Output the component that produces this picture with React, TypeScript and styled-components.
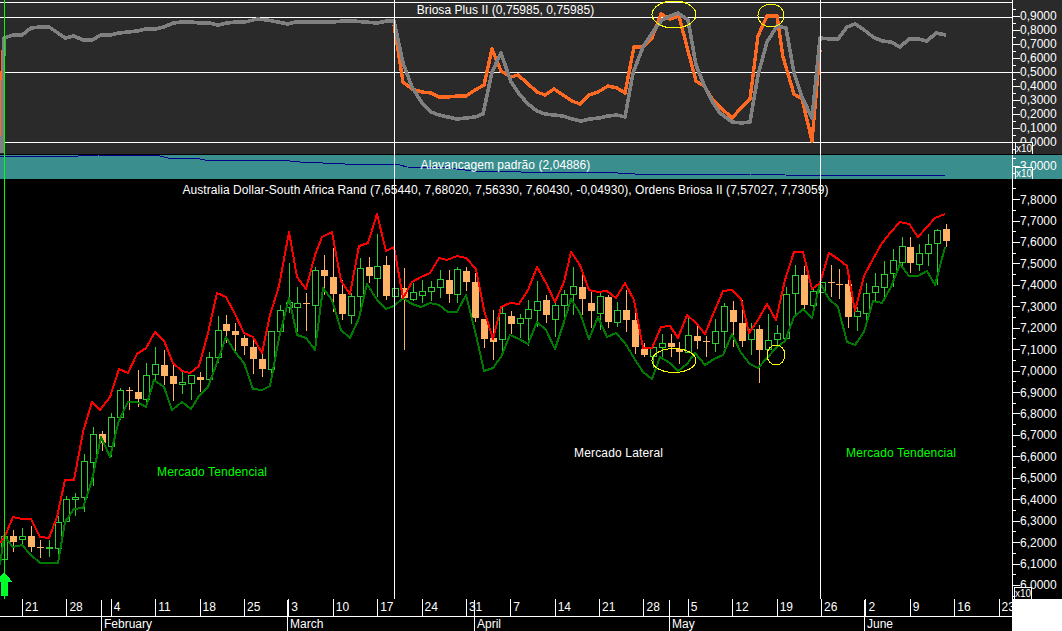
import React from 'react';
import styled, { createGlobalStyle } from 'styled-components';

const GlobalStyle = createGlobalStyle`
  html, body { margin: 0; padding: 0; background: #000; }
  body { font-family: "Liberation Sans", Arial, sans-serif; font-size: 12px; color: #fff; }
`;

// [wick top, body top, body bottom, wick bottom, up]
const candles: [number, number, number, number, number][] = [
  [528, 536, 559, 565, 1], [530, 536, 542, 552, 0], [528, 536, 539, 547, 1], [526, 536, 547, 552, 0],
  [540, 547, 548, 558, 0], [540, 547, 547, 557, 1], [516, 522, 548, 560, 1], [496, 499, 521, 522, 1],
  [493, 497, 499, 516, 1], [454, 461, 497, 512, 1], [427, 434, 462, 486, 1], [431, 434, 443, 451, 0],
  [413, 417, 446, 457, 1], [388, 390, 417, 420, 1], [387, 390, 390, 410, 0], [370, 392, 399, 407, 0],
  [363, 375, 399, 405, 1], [347, 364, 374, 380, 1], [350, 365, 376, 385, 0], [365, 376, 384, 401, 0],
  [372, 382, 384, 394, 1], [375, 375, 383, 400, 1], [372, 377, 380, 392, 0], [352, 357, 379, 385, 1],
  [316, 330, 357, 363, 1], [315, 324, 331, 343, 0], [323, 331, 335, 352, 0], [335, 338, 346, 355, 0],
  [339, 347, 359, 374, 0], [353, 359, 369, 377, 0], [331, 331, 369, 380, 1], [305, 310, 331, 332, 1],
  [263, 302, 307, 313, 1], [287, 303, 307, 332, 1], [293, 303, 303, 331, 0], [267, 270, 305, 338, 1],
  [255, 270, 276, 295, 0], [248, 277, 294, 312, 0], [280, 294, 314, 320, 0], [293, 296, 315, 324, 1],
  [258, 268, 296, 311, 1], [257, 267, 276, 283, 0], [234, 266, 278, 297, 1], [256, 265, 296, 300, 0],
  [288, 288, 296, 296, 1], [268, 288, 298, 350, 0], [283, 292, 299, 301, 1], [280, 291, 295, 303, 1],
  [281, 287, 291, 301, 1], [270, 279, 287, 298, 1], [270, 280, 294, 303, 0], [267, 269, 294, 303, 1],
  [267, 271, 282, 291, 0], [273, 282, 318, 322, 0], [319, 319, 339, 348, 0], [310, 338, 342, 360, 0],
  [307, 313, 339, 354, 1], [311, 316, 324, 334, 0], [314, 318, 323, 338, 1], [300, 309, 318, 346, 1],
  [281, 301, 310, 327, 1], [295, 300, 315, 323, 0], [300, 305, 319, 337, 1], [290, 294, 305, 317, 1],
  [267, 286, 294, 315, 1], [275, 287, 299, 315, 0], [290, 303, 311, 328, 0], [292, 296, 313, 330, 1],
  [295, 297, 322, 328, 0], [302, 310, 322, 327, 1], [290, 310, 320, 332, 0], [309, 320, 347, 354, 0],
  [343, 349, 355, 357, 0], [345, 347, 356, 368, 1], [334, 343, 347, 357, 1], [334, 343, 347, 357, 0],
  [342, 349, 352, 364, 0], [317, 335, 352, 353, 1], [325, 336, 341, 349, 0], [336, 341, 342, 357, 0],
  [319, 331, 343, 352, 1], [303, 306, 331, 348, 1], [301, 310, 322, 347, 0], [300, 323, 341, 347, 0],
  [323, 329, 339, 355, 1], [325, 329, 350, 383, 0], [314, 340, 349, 349, 1], [325, 333, 339, 347, 1],
  [287, 294, 338, 338, 1], [265, 275, 293, 317, 1], [266, 275, 305, 309, 0], [287, 291, 305, 312, 1],
  [282, 282, 292, 292, 1], [265, 282, 282, 297, 0], [269, 284, 284, 299, 0], [274, 284, 317, 328, 0],
  [307, 311, 316, 331, 1], [283, 293, 313, 321, 1], [273, 286, 292, 302, 1], [261, 274, 287, 301, 1],
  [249, 260, 273, 287, 1], [237, 246, 262, 268, 1], [237, 247, 263, 273, 0], [244, 253, 264, 271, 1],
  [234, 244, 253, 266, 1], [229, 230, 243, 285, 1], [224, 229, 241, 247, 0],
];

const redBand = '0,543 5,536 13,517 22,519 31,519 40,537 49,538 57,517 65,480 74,480 83,432 92,402 100,410 110,397 119,369 128,373 137,354 146,348 155,332 164,341 173,363 182,371 190,373 199,366 208,333 217,293 226,297 235,314 244,333 253,337 262,353 270,315 279,286 289,232 297,277 306,289 315,255 322,237 332,232 341,281 350,294 359,246 368,243 377,214 386,251 394,247 403,298 412,282 421,277 430,273 439,258 447,260 457,256 466,258 476,269 484,310 493,339 501,307 510,303 519,304 528,290 537,267 546,283 555,302 564,282 571,252 580,265 589,290 598,292 607,291 616,298 625,283 634,300 643,348 652,348 661,327 670,326 678,338 687,315 696,323 705,334 714,312 723,291 732,290 741,299 749,333 758,320 767,304 776,320 785,280 794,252 803,252 812,289 820,283 829,253 838,259 847,266 855,311 864,276 873,259 882,243 891,232 900,222 909,224 918,237 927,227 935,218 945,214';
const greenBand = '0,565 4,536 13,547 22,545 31,555 40,563 49,563 58,563 65,522 74,509 83,508 92,480 101,437 110,457 119,420 128,402 137,402 146,407 154,380 164,387 172,410 182,402 191,409 199,396 208,387 217,363 226,337 235,352 244,363 253,389 262,390 270,386 279,338 289,298 297,335 306,338 315,350 323,288 332,300 341,330 350,338 359,318 367,284 377,300 386,309 394,306 403,298 412,304 421,307 430,303 439,305 448,312 457,312 466,295 476,335 484,371 493,368 501,357 510,335 519,339 528,344 537,322 546,330 555,349 564,322 571,299 580,313 589,339 598,317 607,337 616,333 625,343 634,358 643,372 652,379 660,357 670,363 678,371 687,364 695,353 705,365 714,359 723,355 732,334 741,353 750,364 758,368 767,358 776,348 785,341 794,317 803,309 812,318 820,283 829,299 838,307 847,342 855,345 864,332 873,301 882,303 891,287 900,264 909,276 918,276 927,271 935,285 945,247';
const orangeStart = '1,150 2,77 3,50';
const orangeLine = '394,25 398,50 403,82 412,89 422,92 431,93 439,97 448,97 457,96 466,96 475,90 484,85 492,49 501,71 511,77 518,75 527,83 537,92 545,95 554,89 563,95 572,101 580,104 589,95 598,92 608,86 617,88 625,93 634,47 643,47 652,38 661,14 670,19 679,16 687,47 696,81 704,86 713,100 720,107 732,118 741,108 750,99 758,36 767,16 777,16 783,57 794,94 802,99 812,141 820,50';
const grayLine = '2,153 3,100 4,38 13,35 22,35 31,28 40,27 49,27 58,33 65,38 74,36 83,40 92,40 101,35 110,35 119,33 128,32 137,31 146,29 155,29 164,27 173,23 182,22 191,22 200,23 209,23 218,25 227,23 236,22 245,22 257,19 267,20 278,22 288,24 295,22 317,22 333,22 343,21 353,21 365,22 377,23 387,21 394,21 403,63 412,87 422,103 431,112 439,115 448,117 457,119 466,118 475,117 483,114 492,72 501,53 511,82 520,95 528,104 537,111 545,114 554,115 563,116 572,119 581,121 590,119 599,118 608,116 617,115 625,117 633,73 643,47 652,33 662,20 670,16 678,13 688,20 696,65 704,85 713,103 720,113 732,122 742,123 750,122 758,75 767,42 777,26 786,28 794,73 802,97 812,118 820,38 830,39 838,39 847,27 855,24 863,29 873,37 882,41 891,42 900,47 909,39 918,39 927,41 936,33 946,35';
const navyLine = '0,156 78,156 98,155 160,156 168,158 195,158 205,160 280,160 300,162 345,164 378,164 400,165 407,167 450,168 472,171 520,171 521,172 600,172 635,174 750,174 785,175 838,176 864,175 945,175';

const topTicks = ['0,9000', '0,8000', '0,7000', '0,6000', '0,5000', '0,4000', '0,3000', '0,2000', '0,1000', '0,0000'];
const mainTicks = Array.from({ length: 19 }, (_, i) => (7.8 - i * 0.1).toFixed(4).replace('.', ','));
const days = ['21', '28', '4', '11', '18', '25', '3', '10', '17', '24', '31', '7', '14', '21', '28', '5', '12', '19', '26', '2', '9', '16', '23'];
const months: [string, number][] = [['February', 186], ['March', 187], ['April', 195], ['May', 195], ['June', 148]];

const Screen = styled.div`
  position: relative;
  width: 1062px;
  height: 631px;
  display: flex;
  flex-direction: column;
  overflow: hidden;
  background: #000;
`;

const Pane = styled.section<{ $h: number; $bg: string }>`
  display: flex;
  height: ${(p) => p.$h}px;
  background: ${(p) => p.$bg};
`;

const Plot = styled.div`
  position: relative;
  width: 1012px;
  height: 100%;
`;

const ChartSvg = styled.svg`
  display: block;
  width: 1012px;
  height: 100%;
`;

const Title = styled.div<{ $top: number }>`
  position: absolute;
  left: 0;
  width: 1011px;
  top: ${(p) => p.$top}px;
  text-align: center;
  line-height: 14px;
  white-space: nowrap;
  letter-spacing: 0.06px;
`;

const Annotation = styled.span<{ $x: number; $y: number; $lime?: boolean }>`
  position: absolute;
  left: ${(p) => p.$x}px;
  top: ${(p) => p.$y}px;
  line-height: 14px;
  letter-spacing: 0.16px;
  white-space: nowrap;
  color: ${(p) => (p.$lime ? '#00ff00' : '#fff')};
`;

const PriceAxis = styled.div<{ $pad: number }>`
  position: relative;
  flex: 1;
  height: 100%;
  overflow: hidden;
  padding-top: ${(p) => p.$pad}px;
  box-sizing: border-box;
  border-left: 1px solid #fff;
  background: inherit;
`;

const TickRow = styled.div<{ $h: number }>`
  display: flex;
  align-items: center;
  height: ${(p) => p.$h}px;
`;

const TickMark = styled.i<{ $major?: boolean }>`
  display: block;
  flex: none;
  width: ${(p) => (p.$major ? 7 : 3)}px;
  height: 1px;
  background: #fff;
`;

const TickLabel = styled.span`
  line-height: 14px;
  white-space: nowrap;
`;

const ScaleBadge = styled.span<{ $left: number }>`
  position: absolute;
  left: ${(p) => p.$left}px;
  bottom: 0;
  width: 18px;
  height: 12px;
  box-sizing: border-box;
  border: 1px solid #fff;
  border-bottom: 0;
  background: inherit;
  font-size: 10px;
  line-height: 11px;
  text-align: center;
`;

const CrossLine = styled.div<{ $x: number; $color: string }>`
  position: absolute;
  left: ${(p) => p.$x}px;
  top: 0;
  width: 1px;
  height: 599px;
  background: ${(p) => p.$color};
`;

const DateBar = styled.div`
  display: flex;
  height: 32px;
`;

const DateScale = styled.div`
  width: 1012px;
  overflow: hidden;
  background: #000;
`;

const DayRow = styled.div`
  display: flex;
  height: 17px;
  padding-left: 22px;
`;

const DayCell = styled.span`
  flex: none;
  width: 44.4px;
  box-sizing: border-box;
  border-left: 1px solid #fff;
  padding-left: 2px;
  line-height: 17px;
`;

const MonthRow = styled.div`
  display: flex;
  height: 15px;
  padding-left: 101px;
  border-top: 1px solid #fff;
`;

const MonthCell = styled.span<{ $w: number }>`
  position: relative;
  flex: none;
  width: ${(p) => p.$w}px;
  box-sizing: border-box;
  border-left: 1px solid #fff;
  padding-left: 2px;
  line-height: 15px;

  &::before {
    content: '';
    position: absolute;
    left: -1px;
    top: -17px;
    width: 1px;
    height: 17px;
    background: #fff;
  }
`;

const Corner = styled.div`
  flex: 1;
  background: #fff;
`;

const Wick = styled.rect<{ $up: boolean }>`
  fill: ${(p) => (p.$up ? '#2fcb2f' : '#ffb366')};
`;

const Body = styled.rect<{ $up: boolean }>`
  fill: ${(p) => (p.$up ? '#000' : '#ffb366')};
  stroke: ${(p) => (p.$up ? '#2fcb2f' : 'none')};
`;

const Trace = styled.polyline<{ $color: string; $w: number }>`
  fill: none;
  stroke: ${(p) => p.$color};
  stroke-width: ${(p) => p.$w}px;
  stroke-linejoin: round;
`;

const Mark = styled.ellipse`
  fill: none;
  stroke: #ffff00;
  stroke-width: 1px;
`;

const GridLine = styled.rect`
  fill: #fff;
`;

const Candle = ({ index, data }: { index: number; data: [number, number, number, number, number] }) => {
  const cx = Math.round(4.3 + 8.884 * index);
  const [hi, top, bottom, lo, up] = data;
  const isUp = up === 1;
  return (
    <g>
      <Wick $up={isUp} x={cx} y={hi} width={1} height={lo - hi} />
      {isUp ? (
        <Body $up x={cx - 2.5} y={top + 0.5} width={6} height={Math.max(bottom - top, 1)} />
      ) : (
        <Body $up={false} x={cx - 3} y={top} width={7} height={Math.max(bottom - top, 1)} />
      )}
    </g>
  );
};

const Axis = ({ labels, step, pad, badge }: { labels: string[]; step: number; pad: number; badge: number }) => (
  <PriceAxis $pad={pad}>
    <TickRow $h={step}>
      <TickMark />
    </TickRow>
    {labels.map((label) => (
      <React.Fragment key={label}>
        <TickRow $h={step}>
          <TickMark $major />
          <TickLabel>{label}</TickLabel>
        </TickRow>
        <TickRow $h={step}>
          <TickMark />
        </TickRow>
      </React.Fragment>
    ))}
    <ScaleBadge $left={badge}>x10</ScaleBadge>
  </PriceAxis>
);

export default function App() {
  return (
    <Screen>
      <GlobalStyle />

      <Pane $h={154} $bg="#2a2a2a">
        <Plot>
          <ChartSvg viewBox="0 0 1012 154" shapeRendering="crispEdges">
            <GridLine x={0} y={2} width={1012} height={1} />
            <GridLine x={0} y={17} width={1012} height={1} />
            <GridLine x={0} y={72} width={1012} height={1} />
            <GridLine x={0} y={142} width={1012} height={1} />
            <Trace points={orangeStart} $color="#ff6a22" $w={3.4} />
            <Trace points={orangeLine} $color="#ff6a22" $w={3.4} />
            <Trace points={grayLine} $color="#808080" $w={3.6} />
            <Mark cx={674} cy={14.5} rx={22} ry={13.5} />
            <Mark cx={771} cy={15.5} rx={13} ry={11.5} />
          </ChartSvg>
          <Title $top={3}>Briosa Plus II (0,75985, 0,75985)</Title>
        </Plot>
        <Axis labels={topTicks} step={7} pad={5.5} badge={2} />
      </Pane>
      <Pane $h={1} $bg="#000" />

      <Pane $h={24} $bg="#3a8e8e">
        <Plot>
          <ChartSvg viewBox="0 155 1012 24" shapeRendering="crispEdges">
            <Trace points={navyLine} $color="#00008b" $w={1} />
          </ChartSvg>
          <Title $top={3}>Alavancagem padrão (2,04886)</Title>
        </Plot>
        <Axis labels={['3,0000']} step={7.5} pad={0} badge={2} />
      </Pane>

      <Pane $h={420} $bg="#000">
        <Plot>
          <ChartSvg viewBox="0 179 1012 420" shapeRendering="crispEdges">
            {candles.map((c, i) => (
              <Candle key={i} index={i} data={c} />
            ))}
            <Trace points={greenBand} $color="#007a00" $w={2} />
            <Trace points={redBand} $color="#ff0000" $w={2} />
            <Mark cx={674} cy={360.5} rx={22} ry={12} />
            <Mark cx={776} cy={355} rx={9} ry={10} />
            <polygon points="4,572 12.5,582 7.5,582 7.5,596 1,596 1,582 -4,582" fill="#00ff33" />
          </ChartSvg>
          <Title $top={4}>
            Australia Dollar-South Africa Rand (7,65440, 7,68020, 7,56330, 7,60430, -0,04930), Ordens Briosa II (7,57027, 7,73059)
          </Title>
          <Annotation $x={157} $y={286} $lime>Mercado Tendencial</Annotation>
          <Annotation $x={574} $y={267}>Mercado Lateral</Annotation>
          <Annotation $x={846} $y={267} $lime>Mercado Tendencial</Annotation>
        </Plot>
        <Axis labels={mainTicks} step={10.725} pad={4.5} badge={1} />
      </Pane>

      <DateBar>
        <DateScale>
          <DayRow>
            {days.map((d, i) => (
              <DayCell key={i}>{d}</DayCell>
            ))}
          </DayRow>
          <MonthRow>
            {months.map(([name, w]) => (
              <MonthCell key={name} $w={w}>{name}</MonthCell>
            ))}
          </MonthRow>
        </DateScale>
        <Corner />
      </DateBar>

      <CrossLine $x={4} $color="#00ff00" />
      <CrossLine $x={394} $color="#fff" />
      <CrossLine $x={820} $color="#fff" />
    </Screen>
  );
}
